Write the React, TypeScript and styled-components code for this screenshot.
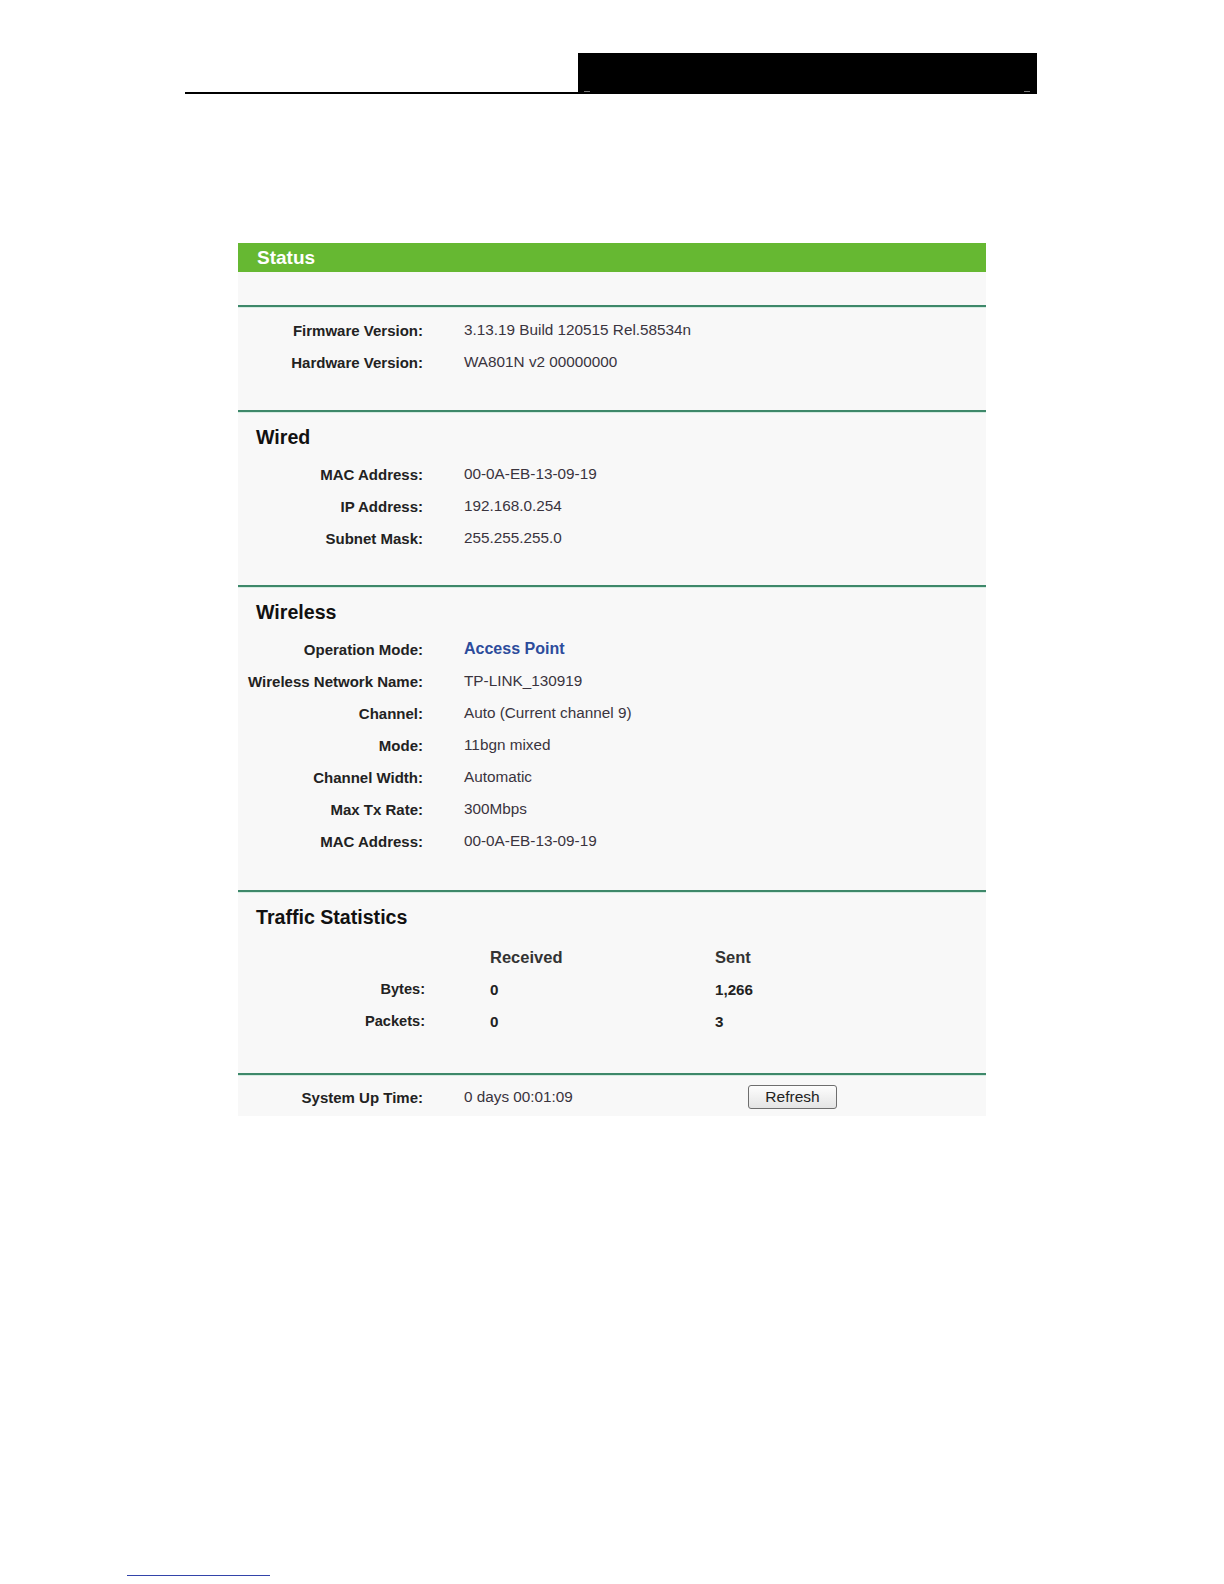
import { Fragment } from "react";
import styled, { createGlobalStyle } from "styled-components";

type Row = { label: string; value: string; accent?: boolean }

const firmware: Row[] = [
    { label: "Firmware Version:", value: "3.13.19 Build 120515 Rel.58534n" },
    { label: "Hardware Version:", value: "WA801N v2 00000000" },
]
const wired: Row[] = [
    { label: "MAC Address:", value: "00-0A-EB-13-09-19" },
    { label: "IP Address:", value: "192.168.0.254" },
    { label: "Subnet Mask:", value: "255.255.255.0" },
]
const wireless: Row[] = [
    { label: "Operation Mode:", value: "Access Point", accent: true },
    { label: "Wireless Network Name:", value: "TP-LINK_130919" },
    { label: "Channel:", value: "Auto (Current channel 9)" },
    { label: "Mode:", value: "11bgn mixed" },
    { label: "Channel Width:", value: "Automatic" },
    { label: "Max Tx Rate:", value: "300Mbps" },
    { label: "MAC Address:", value: "00-0A-EB-13-09-19" },
]
const traffic = [
    { label: "Bytes:", received: "0", sent: "1,266" },
    { label: "Packets:", received: "0", sent: "3" },
]

export default function App() {
    return (
        <>
            <GlobalStyle />
            <Page>
                <Header>
                    <HeaderRule />
                    <HeaderBlock />
                </Header>
                <Panel>
                    <TitleBar>Status</TitleBar>
                    <Spacer />
                    <Section top={7} bottom={32}>
                        {firmware.map(r => (
                            <InfoRow key={r.label}>
                                <Label>{r.label}</Label>
                                <Value accent={r.accent}>{r.value}</Value>
                            </InfoRow>
                        ))}
                    </Section>
                    <Section top={12} bottom={31}>
                        <SectionTitle>Wired</SectionTitle>
                        {wired.map(r => (
                            <InfoRow key={r.label}>
                                <Label>{r.label}</Label>
                                <Value>{r.value}</Value>
                            </InfoRow>
                        ))}
                    </Section>
                    <Section top={12} bottom={33}>
                        <SectionTitle>Wireless</SectionTitle>
                        {wireless.map(r => (
                            <InfoRow key={r.label + r.value}>
                                <Label>{r.label}</Label>
                                <Value accent={r.accent}>{r.value}</Value>
                            </InfoRow>
                        ))}
                    </Section>
                    <Section top={12} bottom={36}>
                        <SectionTitle>Traffic Statistics</SectionTitle>
                        <StatsGrid>
                            <span />
                            <StatHead>Received</StatHead>
                            <StatHead>Sent</StatHead>
                            {traffic.map(t => (
                                <Fragment key={t.label}>
                                    <StatLabel>{t.label}</StatLabel>
                                    <StatValue>{t.received}</StatValue>
                                    <StatValue>{t.sent}</StatValue>
                                </Fragment>
                            ))}
                        </StatsGrid>
                    </Section>
                    <Section top={6} bottom={3}>
                        <UptimeRow>
                            <Label>System Up Time:</Label>
                            <Value>0 days 00:01:09</Value>
                            <RefreshButton>Refresh</RefreshButton>
                        </UptimeRow>
                    </Section>
                </Panel>
                <FootLink />
            </Page>
        </>
    )
}

const GlobalStyle = createGlobalStyle`
    html, body{
        margin: 0;
        padding: 0;
        background: #ffffff;
        overflow: hidden;
        font-family: "Liberation Sans", Arial, sans-serif;
    }
`
const Page = styled.div`
    width: 1224px;
    height: 1584px;
    overflow: hidden;
    padding-top: 53px;
    box-sizing: border-box;
`
const Header = styled.header`
    display: flex;
    align-items: flex-end;
    padding-left: 185px;
`
const HeaderRule = styled.div`
    width: 393px;
    height: 2px;
    background: #000;
`
const HeaderBlock = styled.div`
    position: relative;
    width: 459px;
    height: 41px;
    background: #000;
    &::before, &::after{
        content: "";
        position: absolute;
        bottom: 2px;
        width: 6px;
        height: 1px;
        background: #777;
    }
    &::before{ left: 6px; }
    &::after{ right: 7px; }
`
const Panel = styled.main`
    margin: 149px 0 0 238px;
    width: 748px;
    background: #f8f8f8;
`
const TitleBar = styled.div`
    height: 29px;
    line-height: 29px;
    background: #66b832;
    color: #fff;
    font-weight: bold;
    font-size: 19px;
    padding-left: 19px;
`
const Spacer = styled.div`
    height: 33px;
`
const Section = styled.section<{ top: number, bottom: number }>`
    border-top: 2px solid #3e886a;
    box-shadow: inset 0 1px 0 #d6ebe2;
    padding: ${({ top }) => top}px 0 ${({ bottom }) => bottom}px;
`
const SectionTitle = styled.h3`
    margin: 0 0 8px 18px;
    height: 26px;
    line-height: 26px;
    font-size: 19.6px;
    font-weight: bold;
    color: #111;
`
const InfoRow = styled.div`
    display: grid;
    grid-template-columns: 185px 1fr;
    column-gap: 41px;
    height: 32px;
    align-items: center;
`
const Label = styled.span`
    text-align: right;
    font-size: 15px;
    font-weight: bold;
    color: #222;
    white-space: nowrap;
`
const Value = styled.span<{ accent?: boolean }>`
    font-size: ${({ accent }) => accent ? "16px" : "15.3px"};
    font-weight: ${({ accent }) => accent ? "bold" : "normal"};
    color: ${({ accent }) => accent ? "#2d4c9c" : "#3a343e"};
    white-space: nowrap;
`
const StatsGrid = styled.div`
    display: grid;
    grid-template-columns: 252px 225px 1fr;
    grid-auto-rows: 32px;
    align-items: center;
    margin-top: 11px;
`
const StatHead = styled.span`
    font-size: 16.5px;
    font-weight: bold;
    color: #333;
`
const StatLabel = styled.span`
    text-align: right;
    padding-right: 65px;
    font-size: 14.6px;
    font-weight: bold;
    color: #222;
`
const StatValue = styled.span`
    font-size: 15.2px;
    font-weight: bold;
    color: #222;
`
const UptimeRow = styled.div`
    display: grid;
    grid-template-columns: 185px 284px auto 1fr;
    column-gap: 41px;
    height: 32px;
    align-items: center;
    & > button{
        margin-left: -41px;
    }
`
const RefreshButton = styled.button`
    width: 89px;
    height: 24px;
    padding: 0;
    font-family: "Liberation Sans", Arial, sans-serif;
    font-size: 15.5px;
    color: #222;
    border: 1px solid #6e6e6e;
    border-radius: 3px;
    background: linear-gradient(#fdfdfd, #e4e4e4);
`
const FootLink = styled.div`
    margin: 459px 0 0 127px;
    width: 143px;
    height: 1px;
    background: #3344aa;
`
